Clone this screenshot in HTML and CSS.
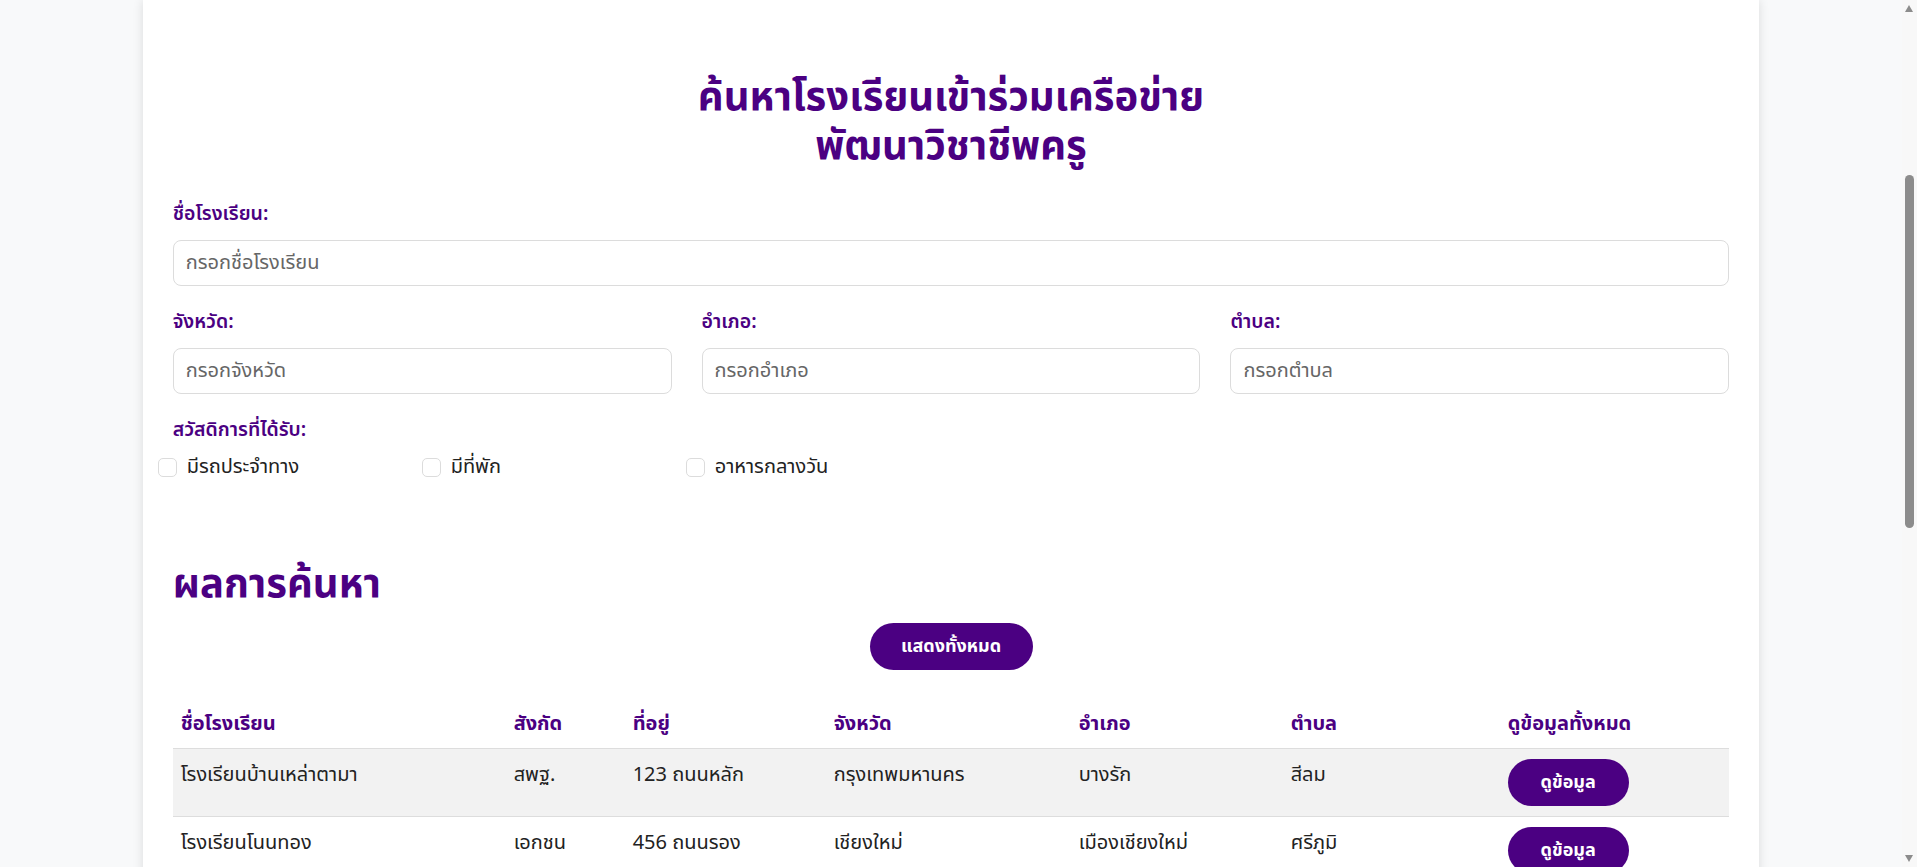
FILE: index.html
```html
<!DOCTYPE html>
<html lang="th">
<head>
<meta charset="utf-8">
<title>ค้นหาโรงเรียนเข้าร่วมเครือข่ายพัฒนาวิชาชีพครู</title>
<link rel="stylesheet" href="styles.css">
</head>
<body>
<div class="page">
<main class="card">
  <h1 class="title">ค้นหาโรงเรียนเข้าร่วมเครือข่าย<br>พัฒนาวิชาชีพครู</h1>

  <div class="field">
    <label class="label" for="school">ชื่อโรงเรียน:</label>
    <input class="input" id="school" type="text" placeholder="กรอกชื่อโรงเรียน">
  </div>

  <div class="grid3">
    <div class="field">
      <label class="label" for="prov">จังหวัด:</label>
      <input class="input" id="prov" type="text" placeholder="กรอกจังหวัด">
    </div>
    <div class="field">
      <label class="label" for="dist">อำเภอ:</label>
      <input class="input" id="dist" type="text" placeholder="กรอกอำเภอ">
    </div>
    <div class="field">
      <label class="label" for="sub">ตำบล:</label>
      <input class="input" id="sub" type="text" placeholder="กรอกตำบล">
    </div>
  </div>

  <div class="field">
    <span class="label">สวัสดิการที่ได้รับ:</span>
    <div class="checks">
      <label class="check"><input type="checkbox" class="box"><span>มีรถประจำทาง</span></label>
      <label class="check"><input type="checkbox" class="box"><span>มีที่พัก</span></label>
      <label class="check"><input type="checkbox" class="box"><span>อาหารกลางวัน</span></label>
    </div>
  </div>

  <h2 class="results">ผลการค้นหา</h2>
  <div class="center"><button class="pill pill-wide">แสดงทั้งหมด</button></div>

  <table class="table">
    <colgroup>
      <col class="c1"><col class="c2"><col class="c3"><col class="c4"><col class="c5"><col class="c6"><col class="c7">
    </colgroup>
    <thead>
      <tr><th>ชื่อโรงเรียน</th><th>สังกัด</th><th>ที่อยู่</th><th>จังหวัด</th><th>อำเภอ</th><th>ตำบล</th><th>ดูข้อมูลทั้งหมด</th></tr>
    </thead>
    <tbody>
      <tr><td>โรงเรียนบ้านเหล่าตามา</td><td>สพฐ.</td><td>123 ถนนหลัก</td><td>กรุงเทพมหานคร</td><td>บางรัก</td><td>สีลม</td><td><button class="pill">ดูข้อมูล</button></td></tr>
      <tr><td>โรงเรียนโนนทอง</td><td>เอกชน</td><td>456 ถนนรอง</td><td>เชียงใหม่</td><td>เมืองเชียงใหม่</td><td>ศรีภูมิ</td><td><button class="pill">ดูข้อมูล</button></td></tr>
    </tbody>
  </table>
</main>
</div>
<div class="scrollbar" aria-hidden="true">
  <span class="arrow arrow-up"></span>
  <span class="thumb"></span>
  <span class="arrow arrow-down"></span>
</div>
</body>
</html>
```

FILE: styles.css
```css
html, body {
  margin: 0;
  padding: 0;
}
body {
  background: #f8f9fa;
  font-family: "Noto Sans Thai", "Noto Sans", sans-serif;
  color: #222;
  overflow: hidden;
  height: 867px;
}
.page {
  margin-right: 15px;
}
.card {
  width: 85%;
  margin: 0 auto;
  background: #fff;
  box-shadow: 0 0 10px rgba(0, 0, 0, 0.12);
  padding: 74px 30px 60px;
  box-sizing: border-box;
}
.title {
  margin: 0 0 30px;
  text-align: center;
  color: #4b0082;
  font-size: 40px;
  font-weight: 700;
  line-height: 49px;
}
.field {
  margin-bottom: 24px;
}
.label {
  display: block;
  color: #4b0082;
  font-size: 19.5px;
  font-weight: 600;
  line-height: 24px;
  margin-bottom: 14px;
}
.input {
  display: block;
  width: 100%;
  box-sizing: border-box;
  height: 46px;
  border: 1px solid #dcdcdc;
  border-radius: 8px;
  padding: 0 12px;
  font-family: inherit;
  font-size: 20px;
  color: #333;
  background: #fff;
}
.input::placeholder {
  color: #666;
}
.grid3 {
  display: grid;
  grid-template-columns: 1fr 1fr 1fr;
  column-gap: 30px;
}
.checks {
  display: flex;
  margin-left: -15px;
  margin-top: -3px;
}
.check {
  width: 264px;
  display: flex;
  align-items: center;
  gap: 10px;
  font-size: 20px;
  line-height: 28px;
  color: #222;
}
.box {
  appearance: none;
  -webkit-appearance: none;
  margin: 0;
  width: 19px;
  height: 19px;
  border: 1px solid #dcdcdc;
  border-radius: 5px;
  background: #fff;
  flex: none;
}
.results {
  margin: 80px 0 14px;
  color: #4b0082;
  font-size: 40px;
  font-weight: 700;
  line-height: 48px;
}
.center {
  display: flex;
  justify-content: center;
  margin-bottom: 26px;
}
.pill {
  height: 47px;
  width: 121px;
  border: none;
  border-radius: 24px;
  background: #4b0082;
  color: #fff;
  font-family: inherit;
  font-size: 18px;
  font-weight: 700;
  padding: 0;
}
.pill-wide {
  width: 163px;
}
.table {
  width: 100%;
  border-collapse: collapse;
  table-layout: fixed;
}
.c1 { width: 333px; }
.c2 { width: 119px; }
.c3 { width: 201px; }
.c4 { width: 245px; }
.c5 { width: 212px; }
.c6 { width: 217px; }
.c7 { width: auto; }
.table th {
  text-align: left;
  color: #4b0082;
  font-size: 20px;
  font-weight: 700;
  line-height: 32px;
  padding: 12px 8px 8px;
  border-bottom: 1px solid #dddddd;
}
.table td {
  font-size: 20px;
  line-height: 32px;
  padding: 10px 8px;
  vertical-align: top;
  border-bottom: 1px solid #dddddd;
  color: #222;
}
.table tbody tr:nth-child(odd) {
  background: #f2f2f2;
}
.scrollbar {
  position: fixed;
  top: 0;
  right: 0;
  width: 15px;
  height: 100%;
  background: #f8f8f8;
}
.thumb {
  position: absolute;
  top: 175px;
  left: 3px;
  width: 9px;
  height: 353px;
  border-radius: 5px;
  background: #8c8c8c;
}
.arrow {
  position: absolute;
  left: 3px;
  width: 0;
  height: 0;
  border-left: 4.5px solid transparent;
  border-right: 4.5px solid transparent;
}
.arrow-up {
  top: 5px;
  border-bottom: 7px solid #8c8c8c;
}
.arrow-down {
  bottom: 5px;
  border-top: 7px solid #8c8c8c;
}
```
